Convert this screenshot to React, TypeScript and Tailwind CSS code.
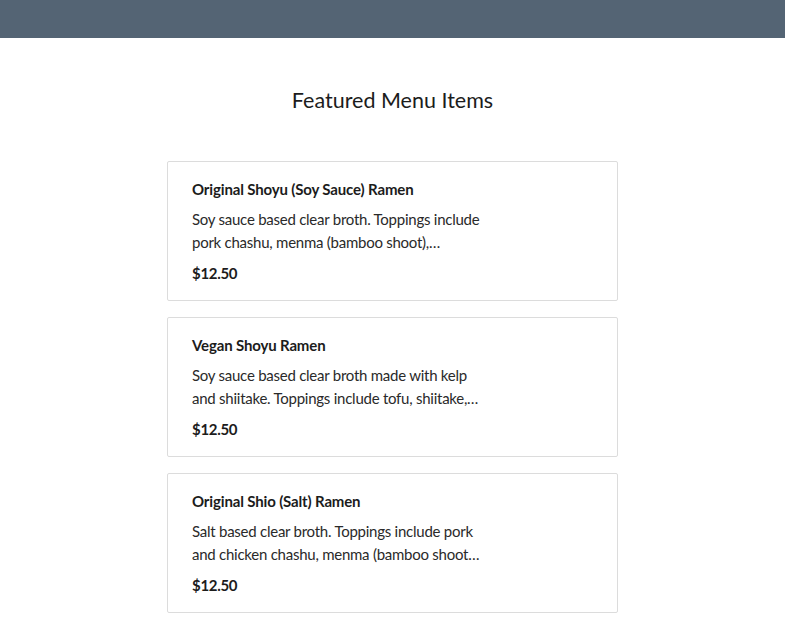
const items = [
  {
    name: "Original Shoyu (Soy Sauce) Ramen",
    desc: "Soy sauce based clear broth. Toppings include pork chashu, menma (bamboo shoot),…",
    price: "$12.50",
  },
  {
    name: "Vegan Shoyu Ramen",
    desc: "Soy sauce based clear broth made with kelp and shiitake. Toppings include tofu, shiitake,…",
    price: "$12.50",
  },
  {
    name: "Original Shio (Salt) Ramen",
    desc: "Salt based clear broth. Toppings include pork and chicken chashu, menma (bamboo shoot…",
    price: "$12.50",
  },
];

export default function App() {
  return (
    <div className="min-h-screen bg-white font-['Lato',sans-serif] text-[#1c1c1c]">
      <header className="h-[38px] bg-[#546474]" />
      <main className="mx-auto w-[451px] pt-[47px]">
        <h2 className="text-center text-[21.5px] leading-[30px] font-normal">Featured Menu Items</h2>
        <div className="mt-[46px] flex flex-col gap-4">
          {items.map((it) => (
            <div key={it.name} className="rounded-[2px] border border-[#dcdcdc] px-6 py-4">
              <h3 className="text-[15px] leading-[22px] font-bold tracking-[-0.15px]">{it.name}</h3>
              <p className="mt-[8px] line-clamp-2 max-w-[296px] text-[15px] leading-[23px] tracking-[-0.25px] text-[#2a2a2a]">
                {it.desc}
              </p>
              <div className="mt-[8px] text-[15px] leading-[22px] font-bold tracking-[-0.3px]">{it.price}</div>
            </div>
          ))}
        </div>
      </main>
    </div>
  );
}
